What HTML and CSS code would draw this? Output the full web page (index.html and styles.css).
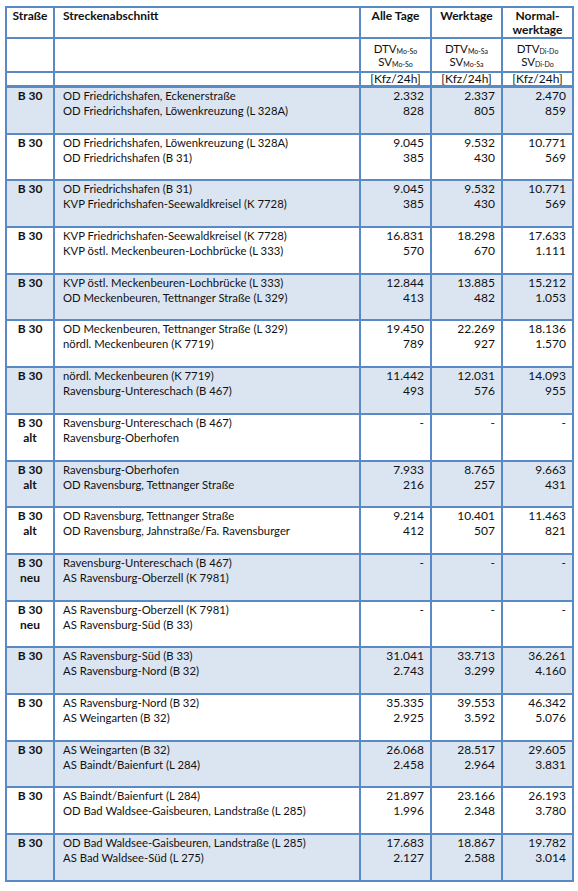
FILE: index.html
```html
<!DOCTYPE html>
<html lang="de">
<head>
<meta charset="utf-8">
<title>Verkehrsbelastungen B 30</title>
<link rel="stylesheet" href="styles.css">
</head>
<body>
<table class="traffic">
  <colgroup>
    <col class="c-road">
    <col class="c-section">
    <col class="c-num">
    <col class="c-num">
    <col class="c-num">
  </colgroup>
  <thead>
    <tr class="h1">
      <th class="road">Straße</th>
      <th class="section">Streckenabschnitt</th>
      <th>Alle Tage</th>
      <th>Werktage</th>
      <th>Normal-<br>werktage</th>
    </tr>
    <tr class="h2">
      <td></td>
      <td></td>
      <td class="unit"><span class="ul">DTV<sub>Mo-So</sub></span><span class="ul">SV<sub>Mo-So</sub></span></td>
      <td class="unit"><span class="ul">DTV<sub>Mo-Sa</sub></span><span class="ul">SV<sub>Mo-Sa</sub></span></td>
      <td class="unit"><span class="ul">DTV<sub>Di-Do</sub></span><span class="ul">SV<sub>Di-Do</sub></span></td>
    </tr>
    <tr class="h3">
      <td></td>
      <td></td>
      <td class="unit">[Kfz/24h]</td>
      <td class="unit">[Kfz/24h]</td>
      <td class="unit">[Kfz/24h]</td>
    </tr>
  </thead>
  <tbody>
    <tr class="shade">
      <td class="road">B 30</td>
      <td class="section">OD Friedrichshafen, Eckenerstraße<br>OD Friedrichshafen, Löwenkreuzung (L 328A)</td>
      <td class="num">2.332<br>828</td>
      <td class="num">2.337<br>805</td>
      <td class="num">2.470<br>859</td>
    </tr>
    <tr>
      <td class="road">B 30</td>
      <td class="section">OD Friedrichshafen, Löwenkreuzung (L 328A)<br>OD Friedrichshafen (B 31)</td>
      <td class="num">9.045<br>385</td>
      <td class="num">9.532<br>430</td>
      <td class="num">10.771<br>569</td>
    </tr>
    <tr class="shade">
      <td class="road">B 30</td>
      <td class="section">OD Friedrichshafen (B 31)<br>KVP Friedrichshafen-Seewaldkreisel (K 7728)</td>
      <td class="num">9.045<br>385</td>
      <td class="num">9.532<br>430</td>
      <td class="num">10.771<br>569</td>
    </tr>
    <tr>
      <td class="road">B 30</td>
      <td class="section">KVP Friedrichshafen-Seewaldkreisel (K 7728)<br>KVP östl. Meckenbeuren-Lochbrücke (L 333)</td>
      <td class="num">16.831<br>570</td>
      <td class="num">18.298<br>670</td>
      <td class="num">17.633<br>1.111</td>
    </tr>
    <tr class="shade">
      <td class="road">B 30</td>
      <td class="section">KVP östl. Meckenbeuren-Lochbrücke (L 333)<br>OD Meckenbeuren, Tettnanger Straße (L 329)</td>
      <td class="num">12.844<br>413</td>
      <td class="num">13.885<br>482</td>
      <td class="num">15.212<br>1.053</td>
    </tr>
    <tr>
      <td class="road">B 30</td>
      <td class="section">OD Meckenbeuren, Tettnanger Straße (L 329)<br>nördl. Meckenbeuren (K 7719)</td>
      <td class="num">19.450<br>789</td>
      <td class="num">22.269<br>927</td>
      <td class="num">18.136<br>1.570</td>
    </tr>
    <tr class="shade">
      <td class="road">B 30</td>
      <td class="section">nördl. Meckenbeuren (K 7719)<br>Ravensburg-Untereschach (B 467)</td>
      <td class="num">11.442<br>493</td>
      <td class="num">12.031<br>576</td>
      <td class="num">14.093<br>955</td>
    </tr>
    <tr>
      <td class="road">B 30<br>alt</td>
      <td class="section">Ravensburg-Untereschach (B 467)<br>Ravensburg-Oberhofen</td>
      <td class="num">-</td>
      <td class="num">-</td>
      <td class="num">-</td>
    </tr>
    <tr class="shade">
      <td class="road">B 30<br>alt</td>
      <td class="section">Ravensburg-Oberhofen<br>OD Ravensburg, Tettnanger Straße</td>
      <td class="num">7.933<br>216</td>
      <td class="num">8.765<br>257</td>
      <td class="num">9.663<br>431</td>
    </tr>
    <tr>
      <td class="road">B 30<br>alt</td>
      <td class="section">OD Ravensburg, Tettnanger Straße<br>OD Ravensburg, Jahnstraße/Fa. Ravensburger</td>
      <td class="num">9.214<br>412</td>
      <td class="num">10.401<br>507</td>
      <td class="num">11.463<br>821</td>
    </tr>
    <tr class="shade">
      <td class="road">B 30<br>neu</td>
      <td class="section">Ravensburg-Untereschach (B 467)<br>AS Ravensburg-Oberzell (K 7981)</td>
      <td class="num">-</td>
      <td class="num">-</td>
      <td class="num">-</td>
    </tr>
    <tr>
      <td class="road">B 30<br>neu</td>
      <td class="section">AS Ravensburg-Oberzell (K 7981)<br>AS Ravensburg-Süd (B 33)</td>
      <td class="num">-</td>
      <td class="num">-</td>
      <td class="num">-</td>
    </tr>
    <tr class="shade">
      <td class="road">B 30</td>
      <td class="section">AS Ravensburg-Süd (B 33)<br>AS Ravensburg-Nord (B 32)</td>
      <td class="num">31.041<br>2.743</td>
      <td class="num">33.713<br>3.299</td>
      <td class="num">36.261<br>4.160</td>
    </tr>
    <tr>
      <td class="road">B 30</td>
      <td class="section">AS Ravensburg-Nord (B 32)<br>AS Weingarten (B 32)</td>
      <td class="num">35.335<br>2.925</td>
      <td class="num">39.553<br>3.592</td>
      <td class="num">46.342<br>5.076</td>
    </tr>
    <tr class="shade">
      <td class="road">B 30</td>
      <td class="section">AS Weingarten (B 32)<br>AS Baindt/Baienfurt (L 284)</td>
      <td class="num">26.068<br>2.458</td>
      <td class="num">28.517<br>2.964</td>
      <td class="num">29.605<br>3.831</td>
    </tr>
    <tr>
      <td class="road">B 30</td>
      <td class="section">AS Baindt/Baienfurt (L 284)<br>OD Bad Waldsee-Gaisbeuren, Landstraße (L 285)</td>
      <td class="num">21.897<br>1.996</td>
      <td class="num">23.166<br>2.348</td>
      <td class="num">26.193<br>3.780</td>
    </tr>
    <tr class="shade">
      <td class="road">B 30</td>
      <td class="section">OD Bad Waldsee-Gaisbeuren, Landstraße (L 285)<br>AS Bad Waldsee-Süd (L 275)</td>
      <td class="num">17.683<br>2.127</td>
      <td class="num">18.867<br>2.588</td>
      <td class="num">19.782<br>3.014</td>
    </tr>
  </tbody>
</table>
</body>
</html>
```

FILE: styles.css
```css
html, body {
  margin: 0;
  padding: 0;
  background: #ffffff;
}

body {
  padding: 6px 0 0 5px;
  font-family: Lato, "Open Sans", "Liberation Sans", sans-serif;
  font-size: 12px;
  line-height: 15px;
  color: #111111;
}

.traffic {
  border-collapse: collapse;
  table-layout: fixed;
  width: 567px;
}

.c-road { width: 48px; }
.c-section { width: 306px; }
.c-num { width: 71px; }

.traffic th,
.traffic td {
  border: 2px solid #5a8ac6;
  padding: 0;
  vertical-align: top;
}

.traffic th {
  font-weight: 700;
  text-align: center;
  padding: 1px 3px 0;
  line-height: 14px;
}

.traffic th.section {
  text-align: left;
  padding-left: 8px;
}

.h2 td {
  height: 29px;
  padding-top: 3px;
  line-height: 13px;
}

.ul {
  display: block;
  height: 13px;
  font-size: 11.5px;
  line-height: 13px;
}

.h3 td {
  height: 10px;
  line-height: 12px;
  border-bottom-width: 3px;
}

.unit {
  text-align: center;
}

.unit sub {
  font-size: 7px;
  line-height: 0;
  vertical-align: -1px;
}

tbody td {
  height: 44.7px;
  padding-top: 3px;
}

tbody td.road {
  font-weight: 700;
  text-align: center;
}

tbody td.section {
  padding-left: 8px;
  white-space: nowrap;
  font-size: 11.3px;
}

tbody td.num {
  text-align: right;
  padding-right: 6px;
}

tr.shade td {
  background: #dbe5f1;
}
```
